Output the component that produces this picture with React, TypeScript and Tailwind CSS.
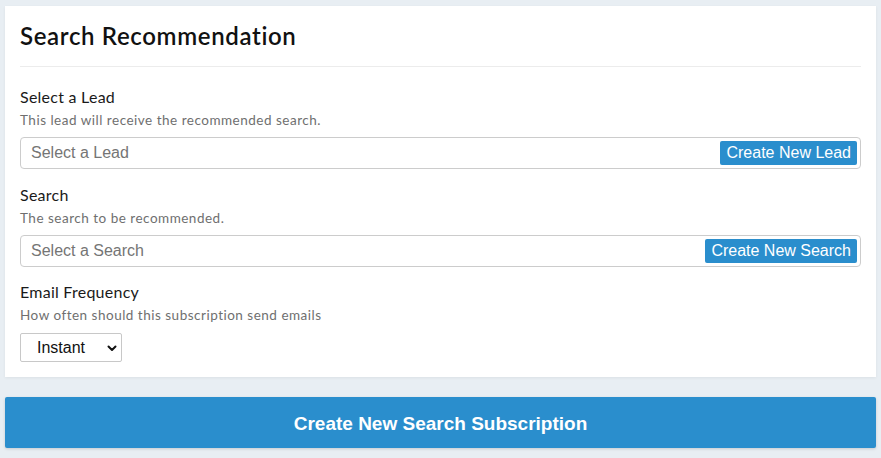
import React from "react";

function FieldLabel({ title, desc }: { title: string; desc: string }) {
  return (
    <div>
      <div className="text-[16px] leading-[19px] tracking-[0.25px] text-[#1a1a1a]">{title}</div>
      <div className="mt-[6px] text-[13.5px] leading-[16px] tracking-[0.5px] text-[#6f6f6f]">{desc}</div>
    </div>
  );
}

function PickerInput({ placeholder, button }: { placeholder: string; button: string }) {
  return (
    <div className="mt-[9px] flex h-[32px] items-center justify-between rounded-[4px] border border-[#cccccc] bg-white pl-[10px] pr-[3px]">
      <span className="font-['Liberation_Sans',Arial,sans-serif] text-[16px] text-[#757575]">{placeholder}</span>
      <button className="flex h-[24px] items-center rounded-[2px] bg-[#2a8ecd] px-[6px] font-['Liberation_Sans',Arial,sans-serif] text-[16px] leading-none text-white">
        {button}
      </button>
    </div>
  );
}

export default function App() {
  return (
    <div className="min-h-[458px] w-full bg-[#e8eef3] px-[5px] pt-[6px] pb-[10px] font-['Lato',sans-serif]">
      <div className="bg-white px-[15px] pt-[15px] pb-[15px] shadow-[0_1px_3px_rgba(0,0,0,0.06)]">
        <h1 className="text-[24px] leading-[29px] font-semibold tracking-[0.65px] text-[#111111]">Search Recommendation</h1>
        <div className="mt-[16px] h-px bg-[#ececec]" />
        <div className="mt-[20px]">
          <FieldLabel title="Select a Lead" desc="This lead will receive the recommended search." />
          <PickerInput placeholder="Select a Lead" button="Create New Lead" />
        </div>
        <div className="mt-[16px]">
          <FieldLabel title="Search" desc="The search to be recommended." />
          <PickerInput placeholder="Select a Search" button="Create New Search" />
        </div>
        <div className="mt-[15px]">
          <FieldLabel title="Email Frequency" desc="How often should this subscription send emails" />
          <div className="relative mt-[10px] h-[29px] w-[102px] rounded-[2px] border border-[#c8c8c8] bg-white">
            <select className="h-full w-full appearance-none bg-transparent pl-[16px] font-['Liberation_Sans',Arial,sans-serif] text-[16px] text-[#111] outline-none">
              <option>Instant</option>
              <option>Daily</option>
              <option>Weekly</option>
            </select>
            <svg
              className="pointer-events-none absolute right-[4px] top-[11px]"
              width="10"
              height="7"
              viewBox="0 0 10 7"
            >
              <path d="M1.5 1.5 L5 5 L8.5 1.5" fill="none" stroke="#111" strokeWidth="2" strokeLinecap="round" strokeLinejoin="round" />
            </svg>
          </div>
        </div>
      </div>
      <button className="mt-[20px] flex h-[51px] w-full items-center justify-center rounded-[2px] bg-[#2a8ecd] pt-[3px] font-['Liberation_Sans',Arial,sans-serif] text-[19px] font-bold text-white shadow-[0_1px_3px_rgba(0,0,0,0.15)]">
        Create New Search Subscription
      </button>
    </div>
  );
}
